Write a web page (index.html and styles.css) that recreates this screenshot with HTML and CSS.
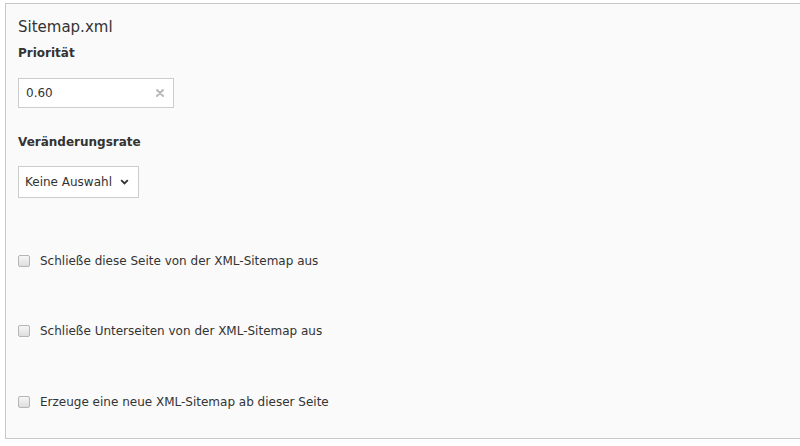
FILE: index.html
```html
<!DOCTYPE html>
<html lang="de">
<head>
<meta charset="utf-8">
<link rel="stylesheet" href="styles.css">
</head>
<body>
<div class="panel">
  <h4 class="title">Sitemap.xml</h4>
  <div class="field">
    <label class="label">Priorität</label>
    <div class="input">
      <span class="value">0.60</span>
      <svg class="clear" width="10" height="10" viewBox="0 0 10 10"><path d="M2 2 L8 8 M8 2 L2 8" stroke="#b8b8b8" stroke-width="2" stroke-linecap="round"/></svg>
    </div>
  </div>
  <div class="field field-select">
    <label class="label">Veränderungsrate</label>
    <div class="select">
      <span class="value">Keine Auswahl</span>
      <svg class="caret" width="9" height="6" viewBox="0 0 9 6"><path d="M1.2 1.2 L4.5 4.5 L7.8 1.2" fill="none" stroke="#333" stroke-width="1.9"/></svg>
    </div>
  </div>
  <div class="check c1"><span class="box"></span><span class="ctext">Schließe diese Seite von der XML-Sitemap aus</span></div>
  <div class="check c2"><span class="box"></span><span class="ctext">Schließe Unterseiten von der XML-Sitemap aus</span></div>
  <div class="check c3"><span class="box"></span><span class="ctext">Erzeuge eine neue XML-Sitemap ab dieser Seite</span></div>
</div>
</body>
</html>
```

FILE: styles.css
```css
html, body {
  margin: 0;
  padding: 0;
  background: #fff;
  overflow: hidden;
}
body {
  padding: 3px 0 0 5px;
  font-family: "DejaVu Sans", Verdana, sans-serif;
  color: #333;
}
.panel {
  background: #fafafa;
  border-top: 1px solid #c8c8c8;
  border-left: 1px solid #c8c8c8;
  border-bottom: 1px solid #c8c8c8;
  height: 436px;
  box-sizing: border-box;
  padding: 14px 0 0 12px;
}
.title {
  margin: 0;
  font-size: 15px;
  font-weight: normal;
  line-height: 18px;
  color: #333;
}
.field {
  display: flex;
  flex-direction: column;
  align-items: flex-start;
}
.label {
  font-size: 12px;
  font-weight: bold;
  line-height: 16px;
  margin-top: 9px;
  color: #333;
}
.input {
  margin-top: 17px;
  width: 156px;
  height: 30px;
  box-sizing: border-box;
  background: #fff;
  border: 1px solid #ccc;
  display: flex;
  align-items: center;
  justify-content: space-between;
  padding: 0 8px 0 7px;
  font-size: 12px;
}
.field-select .label {
  margin-top: 26px;
}
.select {
  margin-top: 16px;
  height: 32px;
  box-sizing: border-box;
  background: #fff;
  border: 1px solid #ccc;
  display: flex;
  align-items: center;
  padding: 0 9px 0 6px;
  font-size: 12px;
  gap: 8px;
}
.value {
  color: #333;
}
.check {
  display: flex;
  align-items: center;
  font-size: 12px;
  height: 14px;
}
.c1 { margin-top: 56px; }
.c2 { margin-top: 56px; }
.c3 { margin-top: 57px; }
.box {
  width: 12px;
  height: 12px;
  box-sizing: border-box;
  border: 1px solid #b5b5b5;
  border-radius: 2px;
  background: linear-gradient(#f6f6f6, #dedede);
  margin: 0 10px 0 0;
}
.ctext {
  color: #333;
}
```
